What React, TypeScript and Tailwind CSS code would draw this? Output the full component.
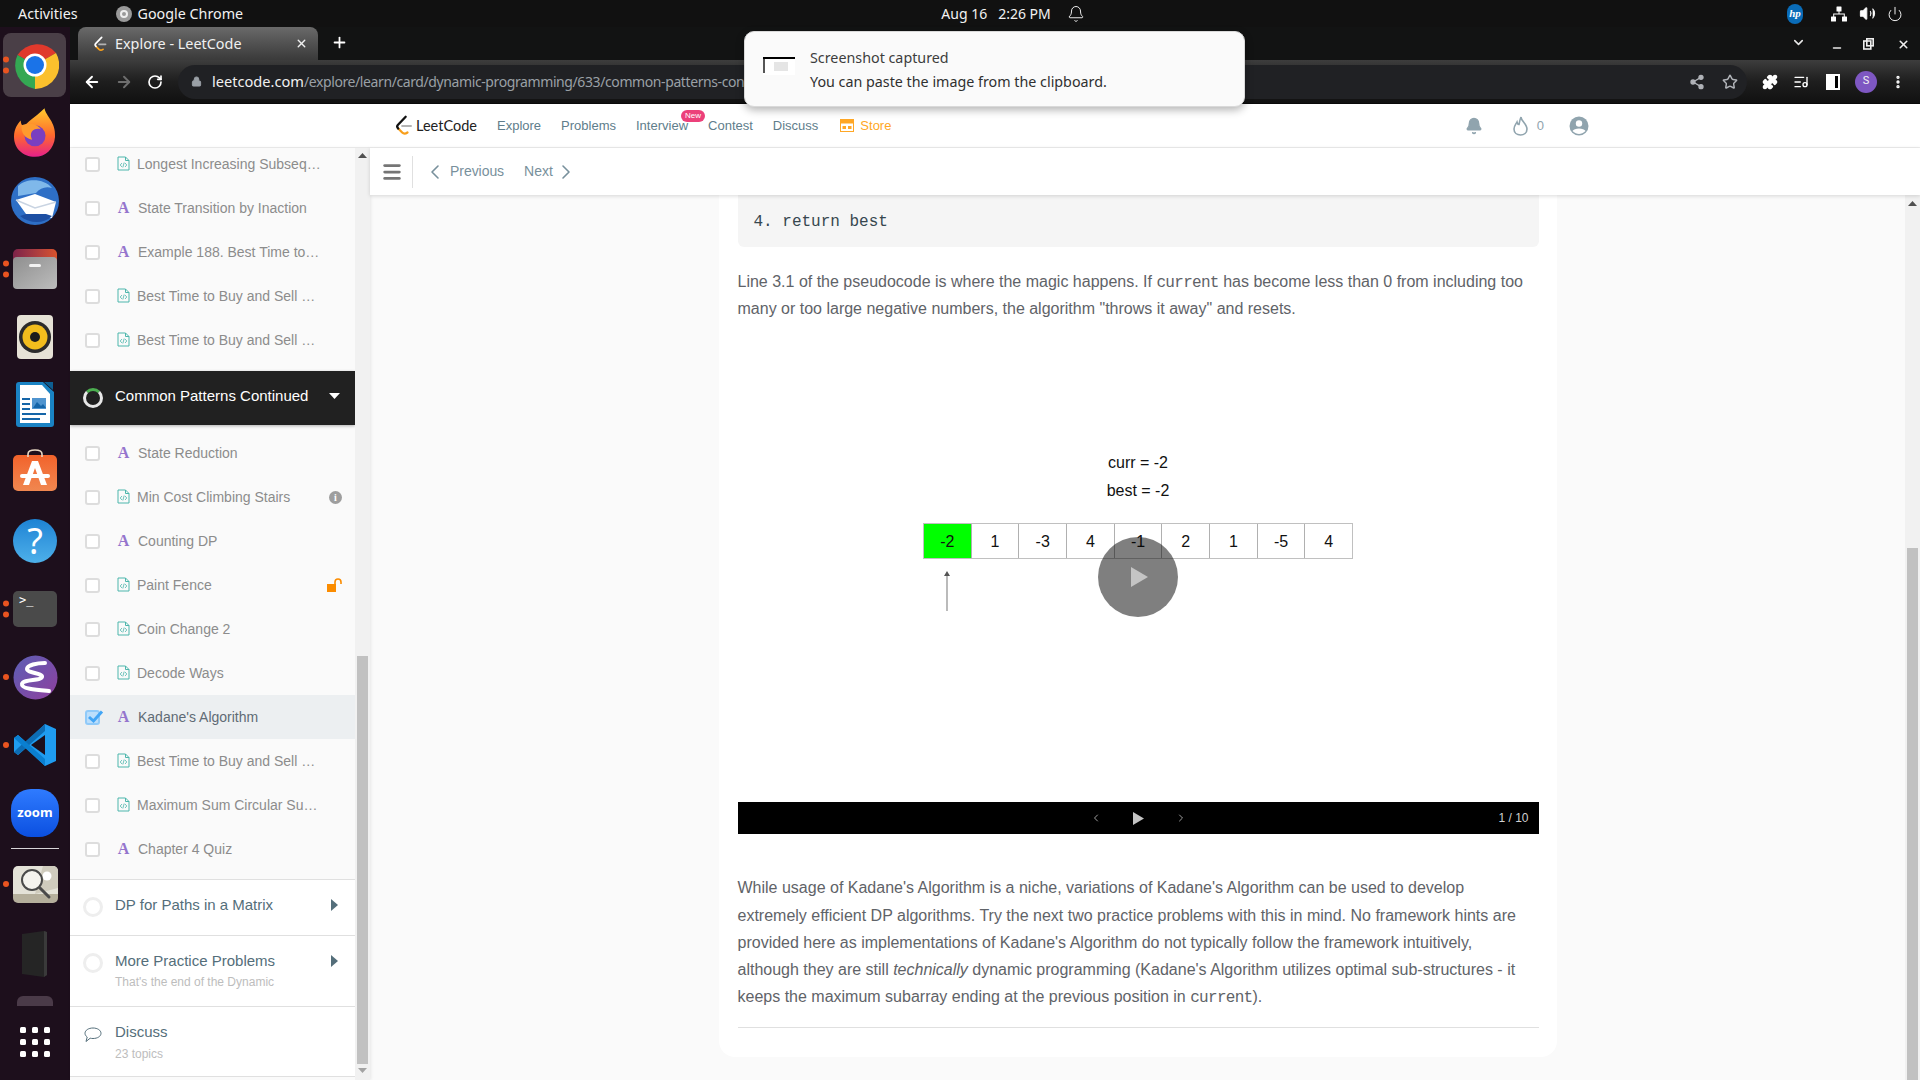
import React from "react";
import { ArrowLeft, ArrowRight, RotateCw, Lock, Share2, Star, Puzzle, X, Plus, ChevronDown, ChevronLeft, ChevronRight, Minus, MoreVertical, Bell, Volume2, Power, ListMusic, Menu } from "lucide-react";

const sysFont = "font-['Noto_Sans',sans-serif]";

function LcLogo({ size = 20, dark = false }: { size?: number; dark?: boolean }) {
  return (
    <svg width={size} height={size} viewBox="0 0 24 24" fill="none">
      <path d="M6 15.5 L10.5 20 Q13 22.5 16.5 20" stroke="#f89f1b" strokeWidth="2.6" strokeLinecap="round" />
      <path d="M14.5 2 L5.5 11.5 Q3.8 13.5 6 15.5" stroke={dark ? "#fff" : "#111"} strokeWidth="2.6" strokeLinecap="round" />
      <path d="M10.5 12.5 H20.5" stroke="#b3b3b3" strokeWidth="2.4" strokeLinecap="round" />
    </svg>
  );
}

function ChromeIcon({ size = 48 }: { size?: number }) {
  return (
    <svg width={size} height={size} viewBox="0 0 48 48">
      <path d="M24 24 L6.5 14 A24 24 0 0 1 45 12 Z" fill="#e0392c" />
      <path d="M24 24 L45 12 A24 24 0 0 1 24 48 Z" fill="#fbc02d" />
      <path d="M24 24 L24 48 A24 24 0 0 1 6.5 14 Z" fill="#34a853" />
      <circle cx="24" cy="24" r="11.5" fill="#fff" />
      <circle cx="24" cy="24" r="9" fill="#1a73e8" />
    </svg>
  );
}

function Firefox() {
  return (
    <svg width="42" height="50" viewBox="0 0 44 52">
      <defs>
        <linearGradient id="ffx" x1="0" y1="0" x2="0" y2="1">
          <stop offset="0" stopColor="#ffcb2d" />
          <stop offset="0.55" stopColor="#ff6a2c" />
          <stop offset="1" stopColor="#e5208a" />
        </linearGradient>
      </defs>
      <path d="M32 0 C33 8 44 14 43 30 C42 43 33 51 22 51 C9 51 0 42 0 30 C0 22 4 16 7 13 C7 17 9 19 11 20 C13 14 22 10 32 0 Z" fill="url(#ffx)" />
      <circle cx="22" cy="29" r="11" fill="#7a3fc0" />
      <path d="M8 18 C14 15 24 16 28 22 C21 20 15 25 19 33 C11 32 7 25 8 18 Z" fill="#ff9a2e" />
    </svg>
  );
}

function Thunderbird() {
  return (
    <svg width="50" height="50" viewBox="0 0 50 50">
      <circle cx="25" cy="25" r="24" fill="#2e6fc6" />
      <path d="M8 10 C16 2 34 2 42 12 C36 10 30 12 26 17 L8 20 Z" fill="#7fb8ea" />
      <path d="M6 24 L25 18 L46 26 L42 42 L16 38 Z" fill="#fff" />
      <path d="M6 24 L25 32 L46 26" stroke="#c9d4e2" strokeWidth="1.5" fill="none" />
      <path d="M10 40 C20 48 34 48 42 40 L36 38 L16 38 Z" fill="#1d4fa3" />
    </svg>
  );
}

function Files() {
  return (
    <div className="relative w-[44px] h-[40px]">
      <div className="absolute left-0 top-0 w-full h-[16px] rounded-t-[5px] bg-gradient-to-r from-[#7c2348] to-[#d9532a]" />
      <div className="absolute left-0 top-[8px] w-full h-[32px] rounded-[4px] bg-gradient-to-br from-[#8f8f8f] to-[#bdbdbd] flex justify-center pt-[7px]">
        <div className="w-[12px] h-[3px] rounded-sm bg-[#f2f2f2]" />
      </div>
    </div>
  );
}

function Rhythmbox() {
  return (
    <div className="w-[36px] h-[44px] rounded-[4px] bg-[#e6e2d6] flex items-center justify-center">
      <svg width="32" height="32" viewBox="0 0 32 32">
        <circle cx="16" cy="16" r="16" fill="#2b2b2b" />
        <circle cx="16" cy="16" r="12.5" fill="#f2bd1d" />
        <circle cx="16" cy="16" r="5" fill="#1c1c1c" />
      </svg>
    </div>
  );
}

function Writer() {
  return (
    <svg width="38" height="46" viewBox="0 0 38 46">
      <path d="M3 0 H27 L38 10 V42 Q38 45 35 45 H3 Q0 45 0 42 V3 Q0 0 3 0 Z" fill="#1a83c4" />
      <path d="M28 0 L37 0 L37 8 Z" fill="#0d5e92" />
      <path d="M4 3 H26 L34 12 V41 H4 Z" fill="#fff" />
      <rect x="6" y="16" width="8" height="2" fill="#1565a8" />
      <rect x="6" y="21" width="8" height="2" fill="#1565a8" />
      <rect x="6" y="26" width="8" height="2" fill="#1565a8" />
      <rect x="16" y="16" width="14" height="11" fill="#4f94cf" />
      <path d="M17 26 L21 20 L25 24 L27 22 L30 26 Z" fill="#1565a8" />
      <rect x="6" y="31" width="24" height="2" fill="#1565a8" />
      <rect x="6" y="36" width="18" height="2" fill="#1565a8" />
    </svg>
  );
}

function Software() {
  return (
    <div className="relative w-[44px] h-[36px]">
      <svg className="absolute left-[13px] -top-[6px]" width="18" height="8" viewBox="0 0 18 8"><path d="M2 8 V5 Q2 1 9 1 Q16 1 16 5 V8" stroke="#e8d8c4" strokeWidth="1.6" fill="none" /></svg>
      <div className="w-full h-full rounded-[5px] bg-gradient-to-b from-[#f2622a] to-[#f08750] flex items-center justify-center">
        <svg width="30" height="26" viewBox="0 0 30 26">
          <path d="M12 1 H18 L27 25 H21 L15 8 L9 25 H3 Z" fill="#fff" />
          <rect x="0" y="14" width="30" height="4" rx="2" fill="#fff" />
        </svg>
      </div>
    </div>
  );
}

function Help() {
  return (
    <div className="w-[44px] h-[44px] rounded-full bg-gradient-to-b from-[#1d83d4] to-[#4db0ea] flex items-center justify-center text-white text-[36px] leading-none font-['Noto_Sans',sans-serif]">?</div>
  );
}

function Terminal() {
  return (
    <div className="w-[44px] h-[36px] rounded-[5px] bg-[#4a4a4a] pl-[6px] pt-[2px] text-white text-[12px] leading-[14px] font-['DejaVu_Sans_Mono',monospace]">&gt;_</div>
  );
}

function Emacs() {
  return (
    <svg width="45" height="45" viewBox="0 0 45 45">
      <defs>
        <linearGradient id="em" x1="0" y1="0" x2="1" y2="1">
          <stop offset="0" stopColor="#5c5fb5" />
          <stop offset="1" stopColor="#8f3f9e" />
        </linearGradient>
      </defs>
      <circle cx="22.5" cy="22.5" r="22" fill="url(#em)" />
      <path d="M32 8 C24 8 14 10 14 14 C14 18 30 18 29 22 C28 26 10 24 9 29 C8 34 24 35 36 36" stroke="#fff" strokeWidth="4" fill="none" strokeLinecap="round" />
    </svg>
  );
}

function VSCode() {
  return (
    <svg width="44" height="44" viewBox="0 0 44 44">
      <path d="M32 1 L43 6 V38 L32 43 L13 25 L5 32 L1 29 V15 L5 12 L13 19 Z" fill="#1f9cf0" />
      <path d="M32 1 L5 25 L1 29 L5 32 L32 8 Z" fill="#0d6cb3" />
      <path d="M1 15 L5 12 L32 36 V43 Z" fill="#0a7fd0" />
      <path d="M32 12 V32 L18 22 Z" fill="#1d0f1c" />
    </svg>
  );
}

function Zoom() {
  return (
    <div className="w-[48px] h-[48px] rounded-[20px] bg-gradient-to-b from-[#2f7bff] to-[#0b4fe0] flex items-center justify-center text-white text-[13px] font-bold font-['Noto_Sans',sans-serif]">zoom</div>
  );
}

function Magnifier() {
  return (
    <div className="relative w-[45px] h-[37px] rounded-[5px] bg-gradient-to-b from-[#e4e2d8] from-75% to-[#b5af9c] to-75% overflow-hidden">
      <svg className="absolute left-0 top-0" width="45" height="37" viewBox="0 0 45 37">
        <path d="M30 0 H45 V22 L22 28 Z" fill="#cfcbbd" />
        <circle cx="34" cy="10" r="4.5" fill="#fff" />
        <circle cx="19" cy="14" r="10" fill="#f4f3ee" stroke="#4a4a4a" strokeWidth="2" />
        <path d="M27 22 L36 31" stroke="#4a4a4a" strokeWidth="3" strokeLinecap="round" />
      </svg>
    </div>
  );
}

function Drive() {
  return (
    <svg width="26" height="46" viewBox="0 0 26 46"><path d="M0 3 L22 0 L25 1 V44 L22 46 L0 43 Z" fill="#252525" /><path d="M22 0 L25 1 V44 L22 46 Z" fill="#3a3a3a" /></svg>
  );
}

function DockItem({ running = 0, active = false, h = 68, children }: { running?: number; active?: boolean; h?: number; children: React.ReactNode }) {
  return (
    <div className="relative w-[70px] flex items-center justify-center shrink-0" style={{ height: h }}>
      {active && <div className="absolute left-[3px] top-[2px] w-[63px] h-[64px] rounded-[8px] bg-[#4a3f47]" />}
      {running > 0 && (
        <div className="absolute left-[3px] top-1/2 -translate-y-1/2 flex flex-col gap-[5px]">
          {Array.from({ length: running }).map((_, i) => (
            <div key={i} className="w-[6px] h-[6px] rounded-full bg-[#e95420]" />
          ))}
        </div>
      )}
      <div className="relative">{children}</div>
    </div>
  );
}

function Dock() {
  return (
    <div className="w-[70px] shrink-0 bg-[#1d0f1c] flex flex-col pt-[4px] overflow-hidden">
      <DockItem running={2} active><ChromeIcon /></DockItem>
      <DockItem><Firefox /></DockItem>
      <DockItem><Thunderbird /></DockItem>
      <DockItem running={2}><Files /></DockItem>
      <DockItem><Rhythmbox /></DockItem>
      <DockItem><Writer /></DockItem>
      <DockItem><Software /></DockItem>
      <DockItem><Help /></DockItem>
      <DockItem running={2}><Terminal /></DockItem>
      <DockItem running={1}><Emacs /></DockItem>
      <DockItem running={1}><VSCode /></DockItem>
      <DockItem><Zoom /></DockItem>
      <div className="h-[1px] w-[48px] mx-auto bg-[#d8d5d8] shrink-0 mt-[1px] mb-[1px]" />
      <DockItem running={1}><Magnifier /></DockItem>
      <DockItem h={72}><Drive /></DockItem>
      <div className="w-[36px] h-[10px] mx-auto rounded-t-[6px] bg-[#4a3a48] shrink-0 mt-[6px]" />
      <div className="grid grid-cols-3 gap-[6px] w-[30px] mx-auto mt-[21px] shrink-0">
        {Array.from({ length: 9 }).map((_, i) => (
          <div key={i} className="w-[6px] h-[6px] rounded-[1.5px] bg-white" />
        ))}
      </div>
    </div>
  );
}

function TopBar() {
  return (
    <div className={`h-[27px] shrink-0 bg-[#111111] flex items-center relative text-[#f2f2f2] text-[14.3px] ${sysFont}`}>
      <span className="ml-[18px]">Activities</span>
      <div className="ml-[38px] w-[16px] h-[16px] rounded-full bg-[#9a9a9a] flex items-center justify-center">
        <div className="w-[8px] h-[8px] rounded-full border-2 border-[#eeeeee]" />
      </div>
      <span className="ml-[6px]">Google Chrome</span>
      <div className="flex-1 flex justify-center items-center">
        <span className="ml-[-4px] text-[14px] text-[#f2f2f2] whitespace-pre">Aug 16   2:26 PM</span>
        <Bell size={18} className="ml-[16px]" strokeWidth={1.3} />
      </div>
      <div className="flex items-center pr-[17px]">
        <div className="w-[16px] h-[20px] rounded-full bg-[#0a6cb8] text-white text-[11px] italic font-bold flex items-center justify-center mr-[28px] font-['Liberation_Serif',serif]">hp</div>
        <svg width="16" height="16" viewBox="0 0 16 16" className="mr-[12px]" fill="#fff"><rect x="5.5" y="0.5" width="5" height="5" rx="0.5" /><rect x="0" y="10.5" width="5" height="5" rx="0.5" /><rect x="11" y="10.5" width="5" height="5" rx="0.5" /><path d="M7.5 5 H8.5 V7.5 H13.8 V11 H12.8 V8.5 H3.2 V11 H2.2 V7.5 H7.5 Z" /></svg>
        <Volume2 size={17} className="mr-[11px]" fill="#fff" strokeWidth={1.5} />
        <Power size={16} strokeWidth={1.5} />
      </div>
    </div>
  );
}

function TabStrip() {
  return (
    <div className="h-[33px] shrink-0 bg-[#121313] flex items-end relative">
      <div className={`ml-[8px] w-[240px] h-[33px] rounded-t-[8px] bg-gradient-to-b from-[#6a6a6a] to-[#3a3a3a] flex items-center pl-[14px] pr-[10px] text-[#f0f0f0] text-[14.4px] ${sysFont}`}>
        <LcLogo size={16} dark />
        <span className="ml-[7px]">Explore - LeetCode</span>
        <X size={13} className="ml-auto" strokeWidth={2.5} />
      </div>
      <Plus size={17} className="text-white ml-[13px] mb-[9px]" strokeWidth={2.5} />
      <div className="flex-1" />
      <ChevronDown size={15} className="text-[#e8e8e8] mb-[10px] mr-[25px]" strokeWidth={2.5} />
      <Minus size={12} className="text-[#e8e8e8] mb-[6px] mr-[20px]" strokeWidth={3} />
      <svg width="11" height="12" viewBox="0 0 11 12" className="mb-[10px] mr-[23px]"><rect x="0.8" y="3" width="7" height="8" fill="none" stroke="#eee" strokeWidth="1.6" /><rect x="3.8" y="0.8" width="6.4" height="7" fill="none" stroke="#eee" strokeWidth="1.6" /></svg>
      <X size={13} className="text-[#eee] mb-[9px] mr-[10px]" strokeWidth={3} />
    </div>
  );
}

function Toolbar() {
  return (
    <div className="h-[44px] shrink-0 bg-gradient-to-b from-[#3d3d3d] via-[#1e1e1e] to-[#111111] border-b border-[#0a0a0a] flex items-center">
      <ArrowLeft size={18} className="text-white ml-[13px]" strokeWidth={2.5} />
      <ArrowRight size={18} className="text-[#6e6e6e] ml-[14px]" strokeWidth={2.5} />
      <RotateCw size={16} className="text-white ml-[14px]" strokeWidth={2.5} />
      <div className="ml-[15px] w-[1569px] h-[34px] rounded-full bg-[#202124] flex items-center pl-[13px] pr-[9px] overflow-hidden">
        <Lock size={11} className="text-[#9aa0a6] shrink-0" fill="#9aa0a6" />
        <span className={`ml-[10px] text-[14.6px] whitespace-nowrap ${sysFont}`}>
          <span className="text-[#f0f0f0]">leetcode.com</span>
          <span className="text-[#9aa0a6] text-[14px] tracking-[-0.4px]">/explore/learn/card/dynamic-programming/633/common-patterns-continued/</span>
        </span>
        <div className="flex-1" />
        <Share2 size={16} className="text-[#b0b3b8] shrink-0" fill="#b0b3b8" />
        <Star size={16} className="text-[#b0b3b8] ml-[17px] shrink-0" strokeWidth={2.2} />
      </div>
      <Puzzle size={16} className="text-white ml-[15px]" fill="#fff" />
      <ListMusic size={16} className="text-white ml-[15px]" />
      <div className="ml-[17px] w-[14px] h-[16px] border-[2px] border-white border-l-[9px] bg-black" />
      <div className="ml-[15px] w-[22px] h-[22px] rounded-full bg-[#7e57c2] text-[#f2f2f2] text-[11px] flex items-center justify-center font-['Roboto',sans-serif]">S</div>
      <MoreVertical size={16} className="text-white ml-[13px]" strokeWidth={3} />
    </div>
  );
}

function Header() {
  const link = "text-[13px] text-[#607d8b]";
  return (
    <div className="h-[44px] shrink-0 bg-white border-b border-[#eeeeee] flex items-center pl-[323px] pr-[331px] font-['Liberation_Sans',sans-serif]">
      <LcLogo size={21} />
      <span className="ml-[2px] text-[14.5px] text-[#212121] font-['Lato',sans-serif] w-[62px]">LeetCode</span>
      <span className={`${link} ml-[19px]`}>Explore</span>
      <span className={`${link} ml-[20px]`}>Problems</span>
      <span className={`${link} ml-[20px] relative`}>
        Interview
        <span className="absolute -top-[6px] -right-[17px] h-[12px] w-[24px] rounded-full bg-[#ec407a] text-white text-[8px] leading-[12px] text-center">New</span>
      </span>
      <span className={`${link} ml-[20px]`}>Contest</span>
      <span className={`${link} ml-[20px]`}>Discuss</span>
      <svg width="14" height="13" viewBox="0 0 14 13" className="ml-[22px]" fill="none">
        <rect x="0.5" y="0.5" width="13" height="12" fill="none" stroke="#ffa726" />
        <rect x="0" y="0" width="14" height="4.5" fill="#ffa726" />
        <rect x="2.5" y="7" width="3.5" height="3" fill="#ffa726" />
        <rect x="8" y="7" width="3.5" height="3" fill="#ffa726" />
      </svg>
      <span className="text-[13px] text-[#ffa726] ml-[6px]">Store</span>
      <div className="flex-1" />
      <Bell size={18} className="text-[#90a4ae]" fill="#90a4ae" />
      <svg width="17" height="22" viewBox="0 0 17 22" fill="none" className="ml-[29px]"><path d="M9 2 C9 6 15 9 15 14 C15 18 12 20 8.5 20 C5 20 2 18 2 14 C2 11 4 9 5 7 C5.5 9 6.5 9.5 7 9.5 C7.5 7 8 4 9 2 Z" stroke="#90a4ae" strokeWidth="1.6" /></svg>
      <span className="text-[13px] text-[#90a4ae] ml-[8px]">0</span>
      <svg width="20" height="20" viewBox="0 0 20 20" className="ml-[25px]">
        <circle cx="10" cy="10" r="9.5" fill="#90a4ae" />
        <circle cx="10" cy="7.5" r="3.2" fill="#fff" />
        <path d="M3.5 15 C5 11.5 15 11.5 16.5 15 C14.5 17 12 18 10 18 C8 18 5.5 17 3.5 15 Z" fill="#fff" />
      </svg>
    </div>
  );
}

function FileIcon() {
  return (
    <svg width="13" height="15" viewBox="0 0 13 15" fill="none" className="shrink-0">
      <path d="M1 1 H8.5 L12 4.5 V14 H1 Z" stroke="#4db6ac" strokeWidth="1" />
      <path d="M8.5 1 V4.5 H12" stroke="#4db6ac" strokeWidth="1" />
      <path d="M5 7 L3.2 9 L5 11 M8 7 L9.8 9 L8 11 M7.2 6.5 L5.8 11.5" stroke="#4db6ac" strokeWidth="0.8" />
    </svg>
  );
}

function Row({ icon, text, checked, active, trail }: { icon: "A" | "F"; text: string; checked?: boolean; active?: boolean; trail?: React.ReactNode }) {
  return (
    <div className={`h-[44px] shrink-0 flex items-center pl-[15px] ${active ? "bg-[#eceff1]" : ""}`}>
      {checked ? (
        <div className="relative w-[15px] h-[15px] rounded-[3px] border-2 border-[#90caf9] bg-[#bbdefb] shrink-0">
          <svg className="absolute -top-[3px] -left-[1px]" width="18" height="16" viewBox="0 0 18 16"><path d="M3 8 L7.5 12 L16 2.5" stroke="#42a5f5" strokeWidth="3" fill="none" /></svg>
        </div>
      ) : (
        <div className="w-[15px] h-[15px] rounded-[3px] border-2 border-[#dddddd] bg-white shrink-0" />
      )}
      <div className="ml-[17px] w-[13px] flex justify-center shrink-0 -mt-[1px]">
        {icon === "A" ? <span className="text-[16px] font-bold text-[#9575cd] font-['Liberation_Serif',serif] leading-none">A</span> : <FileIcon />}
      </div>
      <span className={`${icon === "A" ? "ml-[8px]" : "ml-[7px]"} text-[14px] whitespace-nowrap ${active ? "text-[#5f6b75]" : "text-[#8c8c8c]"}`}>{text}</span>
      {trail && <div className="ml-auto mr-[13px] flex items-center">{trail}</div>}
    </div>
  );
}

function Ring({ className }: { className: string }) {
  return <div className={`w-[20px] h-[20px] rounded-full border-[3px] shrink-0 ${className}`} />;
}

function Caret() {
  return (
    <svg width="7" height="12" viewBox="0 0 7 12" className="ml-auto mr-[17px]"><path d="M0 0 L7 6 L0 12 Z" fill="#546e7a" /></svg>
  );
}

function Sidebar() {
  return (
    <div className="w-[300px] shrink-0 flex bg-[#fafafa] shadow-[1px_0_3px_rgba(0,0,0,0.08)] z-10 font-['Liberation_Sans',sans-serif] overflow-hidden">
      <div className="w-[285px] shrink-0 flex flex-col overflow-hidden">
        <div className="-mt-[6px]" />
        <Row icon="F" text="Longest Increasing Subseq…" />
        <Row icon="A" text="State Transition by Inaction" />
        <Row icon="A" text="Example 188. Best Time to…" />
        <Row icon="F" text="Best Time to Buy and Sell …" />
        <Row icon="F" text="Best Time to Buy and Sell …" />
        <div className="h-[9px] shrink-0" />
        <div className="h-[54px] shrink-0 bg-[#212121] shadow-[0_1px_3px_rgba(0,0,0,0.3)] flex items-center pl-[13px]">
          <div className="w-[20px] h-[20px] rounded-full border-[3px] border-[#e8e8e8] border-t-[#4caf50] shrink-0" />
          <span className="ml-[12px] -mt-[4px] text-[15px] text-white whitespace-nowrap">Common Patterns Continued</span>
          <svg width="11" height="6" viewBox="0 0 11 6" className="ml-auto mr-[15px] -mt-[4px]"><path d="M0 0 H11 L5.5 6 Z" fill="#fff" /></svg>
        </div>
        <div className="h-[6px] shrink-0" />
        <Row icon="A" text="State Reduction" />
        <Row icon="F" text="Min Cost Climbing Stairs" trail={
          <div className="w-[13px] h-[13px] rounded-full bg-[#9e9e9e] text-white text-[10px] leading-[13px] font-bold text-center font-['Liberation_Serif',serif]">i</div>
        } />
        <Row icon="A" text="Counting DP" />
        <Row icon="F" text="Paint Fence" trail={
          <svg width="15" height="14" viewBox="0 0 15 14"><rect x="0" y="6" width="9" height="8" fill="#fb8c00" /><path d="M8 6 V4 Q8 1 11 1 Q14 1 14 4 V6" stroke="#fb8c00" strokeWidth="1.6" fill="none" /></svg>
        } />
        <Row icon="F" text="Coin Change 2" />
        <Row icon="F" text="Decode Ways" />
        <Row icon="A" text="Kadane's Algorithm" checked active />
        <Row icon="F" text="Best Time to Buy and Sell …" />
        <Row icon="F" text="Maximum Sum Circular Su…" />
        <Row icon="A" text="Chapter 4 Quiz" />
        <div className="h-[8px] shrink-0" />
        <div className="h-[56px] shrink-0 bg-white border-t border-[#e0e0e0] flex items-start pl-[13px] pt-[17px]">
          <Ring className="border-[#eeeeee]" />
          <span className="ml-[12px] -mt-[1px] text-[15px] text-[#546e7a] leading-[18px]">DP for Paths in a Matrix</span>
          <div className="ml-auto mt-[2px] flex"><Caret /></div>
        </div>
        <div className="h-[71px] shrink-0 bg-white border-t border-[#e0e0e0] flex items-start pl-[13px] pt-[17px]">
          <Ring className="border-[#eeeeee]" />
          <div className="ml-[12px] -mt-[1px] flex flex-col">
            <span className="text-[15px] text-[#546e7a] leading-[18px]">More Practice Problems</span>
            <span className="text-[12px] text-[#bdbdbd] leading-[14px] mt-[5px]">That's the end of the Dynamic</span>
          </div>
          <div className="ml-auto mt-[2px] flex"><Caret /></div>
        </div>
        <div className="h-[71px] shrink-0 bg-white border-y border-[#e0e0e0] flex items-start pl-[14px] pt-[17px]">
          <svg width="18" height="16" viewBox="0 0 18 16" fill="none" className="mt-[3px]"><path d="M9 1 C13.5 1 17 3.3 17 6.3 C17 9.3 13.5 11.5 9 11.5 C8 11.5 7 11.4 6.2 11.2 L2 14.5 L3.2 10 C1.8 9 1 7.7 1 6.3 C1 3.3 4.5 1 9 1 Z" stroke="#546e7a" strokeWidth="1" /></svg>
          <div className="ml-[13px] -mt-[1px] flex flex-col">
            <span className="text-[15px] text-[#546e7a] leading-[18px]">Discuss</span>
            <span className="text-[12px] text-[#bdbdbd] leading-[14px] mt-[6px]">23 topics</span>
          </div>
        </div>
      </div>
      <div className="w-[15px] shrink-0 bg-[#f1f1f1] flex flex-col items-center relative">
        <svg width="9" height="5" viewBox="0 0 9 5" className="mt-[5px] shrink-0"><path d="M0 5 L4.5 0 L9 5 Z" fill="#505050" /></svg>
        <div className="flex-1" />
        <div className="w-[11px] h-[408px] bg-[#c1c1c1] shrink-0" />
        <svg width="9" height="5" viewBox="0 0 9 5" className="mt-[4px] mb-[7px] shrink-0"><path d="M0 0 L4.5 5 L9 0 Z" fill="#a3a3a3" /></svg>
      </div>
    </div>
  );
}

function SubHeader() {
  return (
    <div className="h-[47px] shrink-0 bg-white shadow-[0_1px_4px_rgba(0,0,0,0.15)] z-10 flex items-center text-[14px] text-[#78909c] font-['Liberation_Sans',sans-serif] relative">
      <Menu size={22} className="text-[#757575] ml-[11px]" strokeWidth={3} />
      <div className="w-px h-[32px] bg-[#e0e0e0] ml-[9px]" />
      <ChevronLeft size={24} className="ml-[10px] text-[#78909c]" strokeWidth={1.6} />
      <span className="ml-[3px] tracking-[-0.05px]">Previous</span>
      <span className="ml-[20px]">Next</span>
      <ChevronRight size={24} className="ml-[1px] text-[#78909c]" strokeWidth={1.6} />
    </div>
  );
}

const Code = ({ children }: { children: React.ReactNode }) => (
  <span className="font-['Liberation_Mono',monospace] text-[16px] leading-none tracking-[-0.7px]">{children}</span>
);

function Animation() {
  const vals = ["-2", "1", "-3", "4", "-1", "2", "1", "-5", "4"];
  return (
    <div className="h-[480px] relative flex flex-col items-center pt-[130px] font-['Liberation_Sans',sans-serif] text-[16px] text-[#111]">
      <div className="h-[28px] leading-[22px]">curr = -2</div>
      <div className="h-[28px] leading-[22px]">best = -2</div>
      <div className="mt-[15px] flex border border-[#c0c0c0] w-[430px] h-[36px]">
        {vals.map((v, i) => (
          <div key={i} className={`flex-1 flex items-center justify-center text-[16px] ${i ? "border-l border-[#b0b0b0]" : "bg-[#00ff00]"}`}>{v}</div>
        ))}
      </div>
      <div className="self-start ml-[206px] mt-[12px]">
        <svg width="6" height="40" viewBox="0 0 6 40"><path d="M3 0 L6 5 H3.4 V40 H2.6 V5 H0 Z" fill="#555" /></svg>
      </div>
      <div className="absolute left-[360px] top-[215px] w-[80px] h-[80px] rounded-full bg-black/50 flex items-center justify-center pl-[3px]">
        <svg width="17" height="20" viewBox="0 0 17 20"><path d="M0 0 L17 10 L0 20 Z" fill="#c4c4c4" /></svg>
      </div>
    </div>
  );
}

function Content() {
  return (
    <div className="flex-1 min-h-0 flex">
      <div className="flex-1 bg-[#fafafa] flex justify-center overflow-hidden">
        <div className="w-[838px] h-[862px] bg-white rounded-b-[16px] pl-[19px] pr-[18px] font-['Liberation_Sans',sans-serif] text-[16px] leading-[27.2px] text-[#5f6368]">
          <div className="h-[52px] bg-[#f5f5f5] rounded-b-[6px] pl-[16px] pt-[14px] font-['Liberation_Mono',monospace] text-[16px] text-[#37474f] leading-[27px]">4. return best</div>
          <p className="mt-[21px]">
            Line 3.1 of the pseudocode is where the magic happens. If <Code>current</Code> has become less than 0 from including too many or too large negative numbers, the algorithm "throws it away" and resets.
          </p>
          <Animation />
          <div className="h-[32px] bg-black flex items-center relative">
            <div className="flex-1 flex justify-center items-center gap-[31px]">
              <ChevronLeft size={12} className="text-[#9e9e9e]" />
              <svg width="11" height="13" viewBox="0 0 11 13"><path d="M0 0 L11 6.5 L0 13 Z" fill="#c4c4c4" /></svg>
              <ChevronRight size={12} className="text-[#9e9e9e]" />
            </div>
            <span className="absolute right-[10px] text-[12px] text-[#d0d0d0]">1 / 10</span>
          </div>
          <p className="mt-[40px] pr-[4px]">
            While usage of Kadane's Algorithm is a niche, variations of Kadane's Algorithm can be used to develop extremely efficient DP algorithms. Try the next two practice problems with this in mind. No framework hints are provided here as implementations of Kadane's Algorithm do not typically follow the framework intuitively, although they are still <em>technically</em> dynamic programming (Kadane's Algorithm utilizes optimal sub-structures - it keeps the maximum subarray ending at the previous position in <Code>current</Code>).
          </p>
          <div className="mt-[17px] border-t border-[#e0e0e0]" />
        </div>
      </div>
      <div className="w-[15px] shrink-0 bg-[#f1f1f1] flex flex-col items-center">
        <svg width="9" height="5" viewBox="0 0 9 5" className="mt-[6px] shrink-0"><path d="M0 5 L4.5 0 L9 5 Z" fill="#505050" /></svg>
        <div className="flex-1" />
        <div className="w-[11px] h-[532px] bg-[#c1c1c1] shrink-0" />
      </div>
    </div>
  );
}

function Notification() {
  return (
    <div className={`absolute left-[744px] top-[31px] w-[501px] h-[76px] rounded-[10px] bg-[#fafafa] border border-[#d9d9d9] shadow-[0_3px_8px_rgba(0,0,0,0.3)] flex items-center z-30 ${sysFont}`}>
      <div className="ml-[18px] w-[32px] h-[18px] bg-white flex flex-col shrink-0 -mt-[7px]">
        <div className="h-[2px] bg-black" />
        <div className="flex-1 flex">
          <div className="w-[2px] h-[14px] bg-[#555]" />
          <div className="ml-[9px] mt-[3px] w-[14px] h-[9px] bg-[#e5e5e5]" />
        </div>
      </div>
      <div className="ml-[15px] pt-[2px] flex flex-col text-[14.3px] leading-[24px] text-[#3d3d3d]">
        <span>Screenshot captured</span>
        <span className="text-[#303030]">You can paste the image from the clipboard.</span>
      </div>
    </div>
  );
}

export default function App() {
  return (
    <div className="relative w-[1920px] h-[1080px] overflow-hidden flex flex-col bg-black">
      <TopBar />
      <div className="flex-1 min-h-0 flex">
        <Dock />
        <div className="flex-1 min-w-0 flex flex-col">
          <TabStrip />
          <Toolbar />
          <Header />
          <div className="flex-1 min-h-0 flex">
            <Sidebar />
            <div className="flex-1 min-w-0 flex flex-col">
              <SubHeader />
              <Content />
            </div>
          </div>
        </div>
      </div>
      <Notification />
    </div>
  );
}
